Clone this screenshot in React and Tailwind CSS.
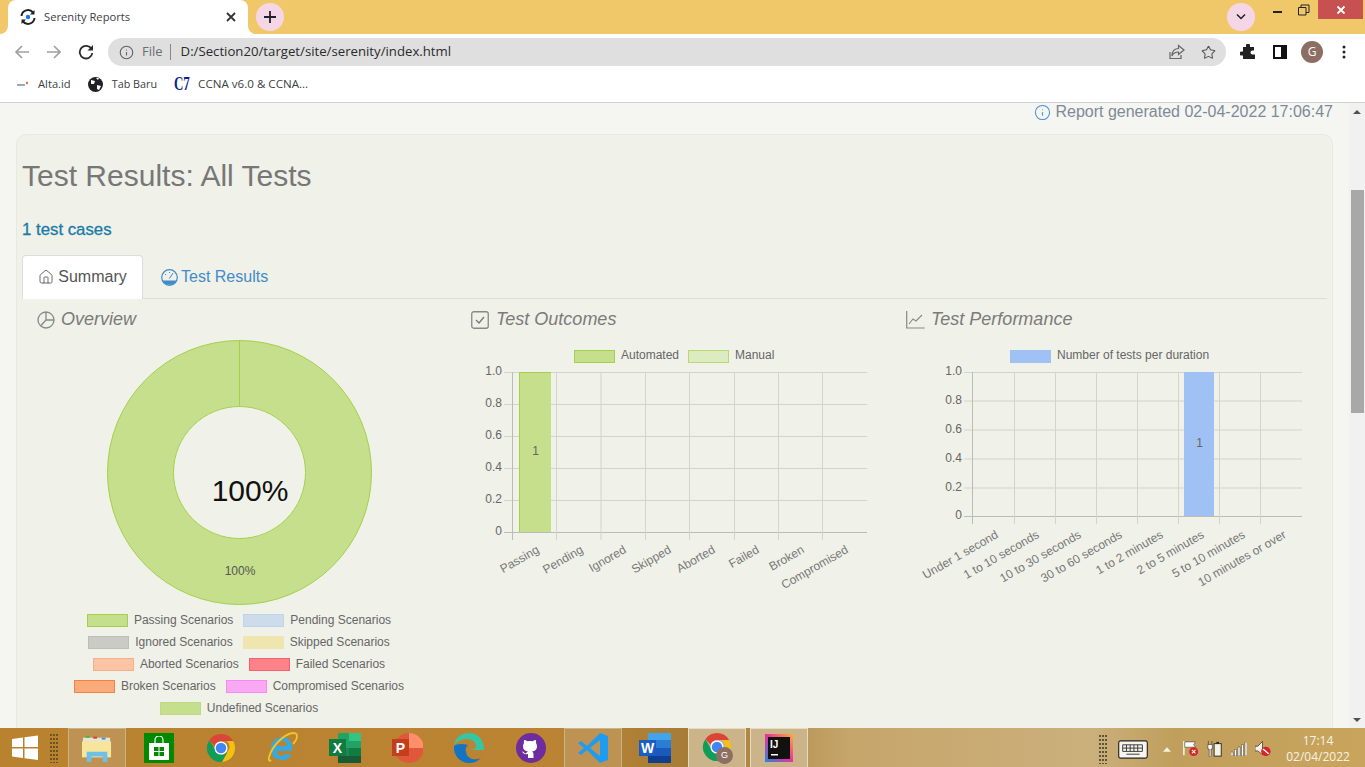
import React from 'react';
import { Info, Star, Home } from 'lucide-react';

const ui = { fontFamily: '"Open Sans","Noto Sans",sans-serif' };

function ChromeLogo({ s = 30 }) {
  return (
    <svg width={s} height={s} viewBox="0 0 32 32">
      <path d="M16 1a15 15 0 0 1 13 7.5H16a7.5 7.5 0 0 0-7 4.8L3.600 7.600A15 15 0 0 1 16 1z" fill="#db4437" />
      <path d="M29 8.500A15 15 0 0 1 17 31l6-11a7.500 7.500 0 0 0-1-11.500z" fill="#f4c20d" />
      <path d="M3.600 7.600L10 18.500a7.500 7.500 0 0 0 13 1.500L17 31A15 15 0 0 1 3.600 7.600z" fill="#0f9d58" />
      <circle cx="16" cy="16" r="7" fill="#fff" />
      <circle cx="16" cy="16" r="5.600" fill="#4285f4" />
    </svg>
  );
}

function Cell({ children, active, open }) {
  const cls = active
    ? 'mx-[2px] w-[58px] h-[39px] flex items-center justify-center border border-b-0 border-[#e6dcc0] bg-[#cbb48a]'
    : open
      ? 'mx-[2px] w-[58px] h-[39px] flex items-center justify-center border border-b-0 border-[#c8b48a] bg-[#bd9252]'
      : 'w-[62px] h-[39px] flex items-center justify-center';
  return <div className={cls}>{children}</div>;
}

function Swatch({ bg, border }) {
  return <span className="w-[41px] h-[13px] border shrink-0" style={{ background: bg, borderColor: border }} />;
}

function LegendRow({ items }) {
  return (
    <div className="h-[22px] flex items-center justify-center gap-[10px] text-[12px] text-[#666]">
      {items.map(([label, bg, border]) => (
        <div key={label} className="flex items-center gap-[6px]">
          <Swatch bg={bg} border={border} />
          <span>{label}</span>
        </div>
      ))}
    </div>
  );
}

function Heading({ icon, children, gap }) {
  return (
    <div className={`h-[41px] pl-[15px] flex items-center ${gap} text-[18px] italic text-[#7b7b7b]`}>
      {icon}
      <span>{children}</span>
    </div>
  );
}

function OutcomesChart() {
  const ys = [372, 404, 436, 468, 500, 532];
  const xs = [512.5, 556.5, 601, 645.5, 689.500, 734.5, 778.5, 822.5];
  const vals = ['1.0', '0.8', '0.6', '0.4', '0.2', '0'];
  const labels = ['Passing', 'Pending', 'Ignored', 'Skipped', 'Aborted', 'Failed', 'Broken', 'Compromised'];
  const ends = [540, 584, 627, 672, 716, 760, 805, 849];
  return (
    <svg width="435" height="270" viewBox="456 340 435 270" style={{ fontFamily: '"Liberation Sans",sans-serif' }}>
      <rect x="574.500" y="350.500" width="40" height="12" fill="#c6df8c" stroke="#a3d14a" />
      <text x="621" y="359" fontSize="12" fill="#666">Automated</text>
      <rect x="688.500" y="350.500" width="40" height="12" fill="#dcebc0" stroke="#b4da70" />
      <text x="735" y="359" fontSize="12" fill="#666">Manual</text>
      {ys.map((y, i) => (
        <g key={y}>
          <line x1="504" x2="867" y1={y + 0.5} y2={y + 0.5} stroke={i === 5 ? '#bcbcb6' : '#d3d4cd'} />
          <text x="502" y={y + 3} fontSize="12" fill="#666" textAnchor="end">{vals[i]}</text>
        </g>
      ))}
      {xs.map((x, i) => (
        <line key={x} x1={x} x2={x} y1="372" y2="540" stroke={i === 0 ? '#bcbcb6' : '#d3d4cd'} />
      ))}
      <rect x="519" y="372" width="32" height="160" fill="#c6df8c" />
      <path d="M519.500 532V372.500H551" fill="none" stroke="#a3d14a" />
      <text x="535.500" y="455" fontSize="12" fill="#666" textAnchor="middle">1</text>
      {labels.map((l, i) => (
        <text key={l} transform={`translate(${ends[i]} 552) rotate(-30)`} fontSize="12" fill="#777" textAnchor="end">{l}</text>
      ))}
    </svg>
  );
}

function PerfChart() {
  const ys = [372, 400.5, 429.500, 458.5, 487.5, 516];
  const xs = [972.5, 1014.5, 1055.5, 1096.5, 1137.5, 1178.5, 1219.5, 1260.5];
  const vals = ['1.0', '0.8', '0.6', '0.4', '0.2', '0'];
  const labels = ['Under 1 second', '1 to 10 seconds', '10 to 30 seconds', '30 to 60 seconds', '1 to 2 minutes', '2 to 5 minutes', '5 to 10 minutes', '10 minutes or over'];
  const ends = [999, 1040, 1082, 1123, 1164, 1205, 1246, 1287];
  return (
    <svg width="435" height="270" viewBox="891 340 435 270" style={{ fontFamily: '"Liberation Sans",sans-serif' }}>
      <rect x="1010" y="350" width="41" height="13" fill="#a0c1f3" />
      <text x="1057" y="359" fontSize="12" fill="#666">Number of tests per duration</text>
      {ys.map((y, i) => (
        <g key={y}>
          <line x1="964" x2="1302" y1={y + 0.5} y2={y + 0.5} stroke={i === 5 ? '#bcbcb6' : '#d3d4cd'} />
          <text x="962" y={y + 3} fontSize="12" fill="#666" textAnchor="end">{vals[i]}</text>
        </g>
      ))}
      {xs.map((x, i) => (
        <line key={x} x1={x} x2={x} y1="372" y2="524" stroke={i === 0 ? '#bcbcb6' : '#d3d4cd'} />
      ))}
      <rect x="1184" y="372" width="30" height="144" fill="#a0c1f3" />
      <text x="1199.500" y="447" fontSize="12" fill="#666" textAnchor="middle">1</text>
      {labels.map((l, i) => (
        <text key={l} transform={`translate(${ends[i]} 537) rotate(-30)`} fontSize="12" fill="#777" textAnchor="end">{l}</text>
      ))}
    </svg>
  );
}

function Donut() {
  return (
    <svg width="435" height="270" viewBox="22 340 435 270" className="block" style={{ fontFamily: '"Liberation Sans",sans-serif' }}>
      <circle cx="239.500" cy="472.500" r="99" fill="none" stroke="#c6df8c" strokeWidth="66" />
      <circle cx="239.500" cy="472.500" r="132" fill="none" stroke="#a3d14a" />
      <circle cx="239.500" cy="472.500" r="66" fill="#f0f1e9" stroke="#a3d14a" />
      <line x1="239.500" x2="239.500" y1="340" y2="407" stroke="#a3d14a" />
      <text x="250" y="501" fontSize="30" fill="#111" textAnchor="middle">100%</text>
      <text x="240" y="575" fontSize="12" fill="#555" textAnchor="middle">100%</text>
    </svg>
  );
}

export default function App() {
  return (
    <div className="w-[1365px] h-[767px] flex flex-col overflow-hidden bg-white" style={{ fontFamily: '"Liberation Sans",sans-serif' }}>
      {/* tab strip */}
      <div className="h-[34px] shrink-0 bg-[#f0c869] flex items-center relative" style={ui}>
        <div className="ml-[8px] w-[240px] h-[34px] bg-white rounded-t-[8px] flex items-center pl-[12px] pr-[12px] self-end relative">
          <svg width="8" height="8" viewBox="0 0 8 8" className="absolute left-[-8px] bottom-0"><path d="M8 0v8H0a8 8 0 0 0 8-8z" fill="#fff" /></svg>
          <svg width="8" height="8" viewBox="0 0 8 8" className="absolute right-[-8px] bottom-0"><path d="M0 0v8h8a8 8 0 0 1-8-8z" fill="#fff" /></svg>
          <svg width="16" height="16" viewBox="0 0 16 16">
            <path d="M1.500 7A6.500 6.500 0 0 1 13 3.500M14.500 9A6.500 6.500 0 0 1 3 12.500" fill="none" stroke="#202124" strokeWidth="2" />
            <path d="M14.500 1v4.500H10M1.500 15v-4.500H6" fill="#202124" />
            <circle cx="8" cy="8" r="2.200" fill="#1a73e8" />
          </svg>
          <span className="ml-[8px] text-[11.200px] text-[#3c4043] flex-1">Serenity Reports</span>
          <svg width="10" height="10" viewBox="0 0 10 10"><path d="M1 1l8 8M9 1L1 9" stroke="#333" strokeWidth="1.800" /></svg>
        </div>
        <div className="ml-[8px] w-[28px] h-[28px] rounded-full bg-[#f5d6e6] flex items-center justify-center">
          <svg width="14" height="14" viewBox="0 0 14 14"><path d="M7 1v12M1 7h12" stroke="#202124" strokeWidth="1.800" /></svg>
        </div>
        <div className="flex-1" />
        <div className="w-[28px] h-[28px] rounded-full bg-[#f5d6e6] flex items-center justify-center mr-[16px]">
          <svg width="12" height="8" viewBox="0 0 12 8"><path d="M2 1.500l4 4 4-4" fill="none" stroke="#202124" strokeWidth="1.500" /></svg>
        </div>
        <div className="w-[14px] h-[34px] flex items-start pt-[11px] mr-[13px]"><span className="block w-[9px] h-[2px] bg-[#222] ml-[2px]" /></div>
        <svg width="12" height="12" viewBox="0 0 12 12" className="self-start mt-[4px] mr-[8px]">
          <path d="M.5 3.500h7.500v7.500H.5zM3 3.500V1h8v7.500H8" fill="none" stroke="#222" />
        </svg>
        <div className="w-[45px] h-[19px] bg-[#c75050] flex items-center justify-center self-start mr-[2px]">
          <svg width="10" height="10" viewBox="0 0 10 10"><path d="M1.500 1.500l7 7M8.500 1.500l-7 7" stroke="#fff" strokeWidth="1.800" /></svg>
        </div>
      </div>

      {/* toolbar */}
      <div className="h-[36px] shrink-0 flex items-center relative" style={ui}>
        <div className="w-[108px] flex items-center shrink-0">
          <svg width="16" height="16" viewBox="0 0 16 16" className="ml-[14px]"><path d="M15 8H2M8 2L2 8l6 6" fill="none" stroke="#a0a0a0" strokeWidth="1.700" /></svg>
          <svg width="16" height="16" viewBox="0 0 16 16" className="ml-[16px]"><path d="M1 8h13M8 2l6 6-6 6" fill="none" stroke="#a0a0a0" strokeWidth="1.700" /></svg>
          <svg width="16" height="16" viewBox="0 0 16 16" className="ml-[16px]"><path d="M13.500 5A6.300 6.300 0 1 0 14.300 9" fill="none" stroke="#2b2b2b" strokeWidth="1.800" /><path d="M15 1v5.500H9.500z" fill="#2b2b2b" /></svg>
        </div>
        <div className="w-[1118px] h-[28px] rounded-full bg-[#dfdfdf] flex items-center shrink-0">
          <Info size={15} strokeWidth={1.800} color="#5f6368" className="ml-[11px]" />
          <span className="ml-[8px] text-[13px] text-[#6b6e71]">File</span>
          <span className="ml-[7px] w-px h-[16px] bg-[#888]" />
          <span className="ml-[10px] text-[13.200px] text-[#2b2b2b]">D:/Section20/target/site/serenity/index.html</span>
          <div className="flex-1" />
          <svg width="16" height="16" viewBox="0 0 16 16"><path d="M1 8v6.500h11V11M9.500 1.500L15 6l-5.500 4.500V8C6 8 4 9.500 3 12c0-5 2.500-7.500 6.500-7.500z" fill="none" stroke="#666" strokeWidth="1.200" /></svg>
          <Star size={15} strokeWidth={1.700} color="#555" className="ml-[16px] mr-[10px]" />
        </div>
        <svg width="16" height="16" viewBox="0 0 16 16" className="ml-[14px]"><path d="M6 1.500a2 2 0 0 1 4 0V3h4v3.500h-1.500a2 2 0 0 0 0 4H15V15H3v-3.500H1.500a2 2 0 0 1 0-4H3V3h3z" fill="#202124" /></svg>
        <svg width="14" height="14" viewBox="0 0 14 14" className="ml-[17px]"><path d="M0 0h14v14H0zM2 2v10h6V2z" fill="#111" fillRule="evenodd" /></svg>
        <div className="ml-[14px] w-[22px] h-[22px] rounded-full bg-[#8d6e63] text-white text-[12px] flex items-center justify-center">G</div>
        <svg width="4" height="14" viewBox="0 0 4 14" className="ml-[19px]"><circle cx="2" cy="2" r="1.500" fill="#222" /><circle cx="2" cy="7" r="1.500" fill="#222" /><circle cx="2" cy="12" r="1.500" fill="#222" /></svg>
      </div>

      {/* bookmarks */}
      <div className="h-[33px] shrink-0 flex items-center pb-[4px] border-b border-[#cfcfcf] text-[11.200px] text-[#3c4043]" style={ui}>
        <svg width="12" height="6" viewBox="0 0 12 6" className="ml-[17px]"><path d="M0 4h8" stroke="#7a8a9a" strokeWidth="1.500" /><circle cx="10" cy="2" r="1.200" fill="#e8703a" /></svg>
        <span className="ml-[9px]">Alta.id</span>
        <svg width="15" height="15" viewBox="0 0 15 15" className="ml-[17px]"><circle cx="7.500" cy="7.500" r="7.500" fill="#202124" /><path d="M3 3l4 1-1 3-3 0zM9 8l4 1-2 4-2-1zM8 1h3l-1 2z" fill="#fff" /></svg>
        <span className="ml-[9px] text-[10.800px]">Tab Baru</span>
        <span className="ml-[17px] text-[18px] font-black text-[#0b1f8f] leading-none w-[16px] whitespace-nowrap inline-block origin-left scale-x-[0.72]" style={{ fontFamily: '"Liberation Serif",serif' }}>C7</span>
        <span className="ml-[8px] text-[11.600px]">CCNA v6.0 &amp; CCNA...</span>
      </div>

      {/* page */}
      <div className="flex-1 min-h-0 flex bg-[#f5f6f1] overflow-hidden">
        <div className="w-[1349px] shrink-0 overflow-hidden">
          <div className="h-[18px] pr-[16px] flex items-center justify-end gap-[4px] text-[16px] text-[#7d8a99]">
            <Info size={17} strokeWidth={1.500} color="#4a90d9" />
            <span>Report generated 02-04-2022 17:06:47</span>
          </div>
          <div className="ml-[16px] mt-[13px] w-[1317px] h-[640px] rounded-[10px] border border-[#e8e9e0] bg-[#f0f1e9] pl-[5px] pr-[5px]">
            <h1 className="mt-[23px] h-[36px] text-[30px] leading-[36px] text-[#777]">Test Results: All Tests</h1>
            <div className="mt-[26px] h-[20px] text-[16.800px] leading-[20px] font-medium text-[#1a7ba8]" style={{ WebkitTextStroke: '0.3px #1a7ba8' }}>1 test cases</div>
            <div className="mt-[15px] h-[44px] flex border-b border-[#dcdde0]">
              <div className="w-[121px] h-[44px] pb-[2px] bg-white border border-b-0 border-[#dcdde0] rounded-t-[4px] flex items-center justify-center gap-[4px] text-[16px] text-[#555]">
                <Home size={16} strokeWidth={1.300} color="#555" />
                <span>Summary</span>
              </div>
              <div className="ml-[18px] h-[44px] flex items-center gap-[3px] text-[16px] text-[#428bca]">
                <svg width="17" height="17" viewBox="0 0 17 17">
                  <circle cx="8.500" cy="8.500" r="7.800" fill="none" stroke="#428bca" strokeWidth="1.200" />
                  <path d="M1.500 11.500h14a7.800 7.800 0 0 1-14 0z" fill="#428bca" />
                  <path d="M8.500 9.500L12 4M8.500 3v1M4 5l1 1" fill="none" stroke="#428bca" />
                </svg>
                <span>Test Results</span>
              </div>
            </div>
            <div className="flex">
              <div className="w-[434px] shrink-0">
                <Heading gap="gap-[6px]" icon={
                  <svg width="18" height="18" viewBox="0 0 18 18"><circle cx="9" cy="9" r="8" fill="none" stroke="#888" strokeWidth="1.300" /><path d="M9 1v8h8M9 9l-5.500 6" fill="none" stroke="#888" strokeWidth="1.300" /></svg>
                }>Overview</Heading>
                <Donut />
                <div className="mt-[-1px]">
                  <LegendRow items={[['Passing Scenarios', '#c6df8c', '#a3d14a'], ['Pending Scenarios', '#cddcea', '#bcd5ec']]} />
                  <LegendRow items={[['Ignored Scenarios', '#cacbc4', '#bdbeb8'], ['Skipped Scenarios', '#efe5ae', '#efe5ae']]} />
                  <LegendRow items={[['Aborted Scenarios', '#fbc4a4', '#fbae85'], ['Failed Scenarios', '#fd8289', '#f6606c']]} />
                  <LegendRow items={[['Broken Scenarios', '#fbaa7b', '#f9803f'], ['Compromised Scenarios', '#f9a9f4', '#f98af5']]} />
                  <LegendRow items={[['Undefined Scenarios', '#c6df8c', '#bcdb80']]} />
                </div>
              </div>
              <div className="w-[435px] shrink-0">
                <Heading gap="gap-[7px]" icon={
                  <svg width="18" height="18" viewBox="0 0 18 18"><rect x=".75" y=".75" width="16.500" height="16.500" rx="2" fill="none" stroke="#888" strokeWidth="1.300" /><path d="M5 9l3 3 5-6" fill="none" stroke="#777" strokeWidth="1.300" /></svg>
                }>Test Outcomes</Heading>
                <OutcomesChart />
              </div>
              <div className="w-[435px] shrink-0">
                <Heading gap="gap-[6px]" icon={
                  <svg width="19" height="18" viewBox="0 0 19 18"><path d="M.7 0v17h18" fill="none" stroke="#888" strokeWidth="1.200" /><path d="M3 13l4-5 3 2 6-6" fill="none" stroke="#888" strokeWidth="1.100" /></svg>
                }>Test Performance</Heading>
                <PerfChart />
              </div>
            </div>
          </div>
        </div>
        <div className="w-[16px] shrink-0 bg-[#f1f1f1] flex flex-col items-center">
          <div className="h-[17px] flex items-center"><span className="w-0 h-0 border-x-[4px] border-x-transparent border-b-[4px] border-b-[#505050]" /></div>
          <div className="mt-[70px] w-[13px] h-[223px] bg-[#a8a8a8] shrink-0 self-end mr-[1px]" />
          <div className="flex-1" />
          <div className="h-[17px] flex items-center"><span className="w-0 h-0 border-x-[4px] border-x-transparent border-t-[4px] border-t-[#505050]" /></div>
        </div>
      </div>

      {/* taskbar */}
      <div className="h-[39px] shrink-0 flex items-center" style={{ background: 'linear-gradient(90deg,#b9822f 0%,#bb8433 40%,#a37c38 52%,#c6a56a 62%,#cbb07c 80%,#c09f5c 86%,#c9a45c 100%)' }}>
        <svg width="26" height="26" viewBox="0 0 26 26" className="ml-[12px] mr-[12px] shrink-0"><path d="M0 4l11-1.500V12H0zM12.500 2.300L26 .5V12H12.500zM0 13.500h11V23L0 21.500zM12.500 13.500H26V25l-13.500-1.800z" fill="#fff" /></svg>
        <svg width="8" height="30" viewBox="0 0 8 30" className="shrink-0 mr-[8px]"><g fill="#6b5426">{[1,5,9,13,17,21,25,29].map((y) => <g key={y}><rect x="0" y={y} width="2" height="2" /><rect x="3" y={y} width="2" height="2" /><rect x="6" y={y} width="2" height="2" /></g>)}</g></svg>
        <Cell open>
          <svg width="32" height="30" viewBox="0 0 32 32"><path d="M1 5h29v6H1z" fill="#e8e4d0" /><rect x="4" y="3" width="4" height="2" fill="#3cb54a" /><rect x="12" y="4" width="4" height="2" fill="#d04030" /><rect x="21" y="5" width="4" height="2" fill="#3a90d8" /><path d="M0 9h31v17H0z" fill="#f7e59c" /><path d="M5 20h22v11h-5v-6H10v6H5z" fill="#6ec0e8" /></svg>
        </Cell>
        <Cell>
          <div className="w-[30px] h-[30px] bg-[#008a00] flex items-center justify-center">
            <svg width="22" height="24" viewBox="0 0 22 24"><path d="M1 7h20v17H1z" fill="#fff" /><path d="M7 7V4a4 4 0 0 1 8 0v3" fill="none" stroke="#fff" strokeWidth="1.200" /><path d="M6 11h4.500v4H6zM11.500 11H16v4h-4.500zM6 16h4.500v4H6zM11.500 16H16v4h-4.500z" fill="#008a00" /></svg>
          </div>
        </Cell>
        <Cell><ChromeLogo /></Cell>
        <Cell>
          <svg width="32" height="32" viewBox="0 0 32 32"><path d="M25 15c0-6-4-10-10-10S4 10 4 17s5 11 11 11c5 0 8-2 9-6h-6c-1 1-2 2-3 2-3 0-5-2-5-5h15zM10 14c0-3 2-5 5-5s5 2 5 5z" fill="#37a9e0" fillRule="evenodd" /><path d="M4 28C0 32 1 20 12 9 21 0 30-1 30 4c0 3-2 6-4 8" fill="none" stroke="#f2c522" strokeWidth="1.800" /></svg>
        </Cell>
        <Cell>
          <svg width="32" height="32" viewBox="0 0 32 32"><path d="M9 1h23v30H9z" fill="#21a366" /><path d="M20 1h12v8H20z" fill="#33c481" /><path d="M9 16h11v8H9z" fill="#185c37" opacity=".4" /><path d="M20 16h12v8H20z" fill="#107c41" /><path d="M9 24h23v7H9z" fill="#185c37" /><rect x="0" y="7" width="17" height="17" fill="#107c41" /><text x="8.500" y="20.500" fontSize="14" fontWeight="700" fill="#fff" textAnchor="middle">X</text></svg>
        </Cell>
        <Cell>
          <svg width="32" height="32" viewBox="0 0 32 32"><circle cx="18" cy="16" r="15" fill="#e0573c" /><path d="M18 1a15 15 0 0 1 15 15H18z" fill="#ff8f6b" /><rect x="1" y="7" width="17" height="17" fill="#c43e1c" /><text x="9.500" y="20.500" fontSize="14" fontWeight="700" fill="#fff" textAnchor="middle">P</text></svg>
        </Cell>
        <Cell>
          <svg width="32" height="32" viewBox="0 0 32 32"><path d="M31 17C31 8 25 1 16 1 8 1 2 6 1 14c3-5 8-7 13-7 6 0 9 4 9 7s-3 4-7 4h15z" fill="#37c6a4" /><path d="M1 14c-1 9 6 17 15 17 5 0 9-2 12-5-6 3-14 1-15-6-1-3 0-5 2-7C9 11 3 12 1 14z" fill="#1474c4" /></svg>
        </Cell>
        <Cell>
          <svg width="30" height="30" viewBox="0 0 30 30"><circle cx="15" cy="15" r="15" fill="#6e2c9e" /><path d="M12 25v-4c-4 1-5-1-6-2.500 2 0 2 2 4 2 .5-1 1-1.500 2-2-3-.5-5-2-5-5 0-1.500.5-2.500 1-3.500-.2-.8-.2-2 .3-3 1.200 0 2.200.6 3 1.300a9 9 0 0 1 5.400 0c.8-.7 1.800-1.300 3-1.300.5 1 .5 2.200.3 3 .5 1 1 2 1 3.500 0 3-2 4.500-5 5 1 .6 1.500 1.500 1.500 3V25z" fill="#fff" /></svg>
        </Cell>
        <Cell open>
          <svg width="32" height="32" viewBox="0 0 32 32"><path d="M23 1L10 14l-6-5-3 2 6 5-6 5 3 2 6-5 13 13 8-3V4z" fill="#1f9cf0" /><path d="M23 8v16l-10-8z" fill="#bb9557" /></svg>
        </Cell>
        <Cell>
          <svg width="32" height="32" viewBox="0 0 32 32"><path d="M9 1h23v30H9z" fill="#2b7cd3" /><path d="M9 1h23v7H9z" fill="#41a5ee" /><path d="M9 16h23v8H9z" fill="#185abd" /><path d="M9 24h23v7H9z" fill="#103f91" /><rect x="0" y="8" width="17" height="16" fill="#185abd" /><rect x="1" y="9" width="15" height="14" fill="#1c5fc4" /><text x="8.500" y="21" fontSize="14" fontWeight="700" fill="#fff" textAnchor="middle">W</text></svg>
        </Cell>
        <Cell active>
          <div className="relative w-[30px] h-[32px]">
            <ChromeLogo />
            <div className="absolute left-[14px] top-[15px] w-[17px] h-[17px] rounded-full bg-[#8d6e63] text-white text-[9px] flex items-center justify-center">G</div>
          </div>
        </Cell>
        <Cell active>
          <svg width="28" height="28" viewBox="0 0 28 28" style={{ fontFamily: '"Liberation Sans",sans-serif' }}>
            <defs><linearGradient id="ij" x1="0" y1="1" x2="1" y2="0"><stop offset="0" stopColor="#1e88e5" /><stop offset=".5" stopColor="#ec2f9c" /><stop offset="1" stopColor="#f9b233" /></linearGradient></defs>
            <rect width="28" height="28" fill="url(#ij)" /><rect x="3" y="3" width="22" height="22" fill="#111" />
            <text x="5" y="14" fontSize="10" fontWeight="700" fill="#fff">IJ</text><rect x="6" y="20" width="7" height="1.500" fill="#fff" />
          </svg>
        </Cell>
        <div className="flex-1" />
        <div className="flex items-center pt-[3px] shrink-0">
          <svg width="8" height="30" viewBox="0 0 8 30" className="shrink-0 mr-[11px]"><g fill="#5e5436">{[1,5,9,13,17,21,25,29].map((y) => <g key={y}><rect x="0" y={y} width="2" height="2" /><rect x="3" y={y} width="2" height="2" /><rect x="6" y={y} width="2" height="2" /></g>)}</g></svg>
          <svg width="30" height="19" viewBox="0 0 32 20" className="shrink-0 mr-[15px]"><rect x=".75" y=".75" width="30.500" height="18.500" rx="2" fill="#f7f5ee" stroke="#222" strokeWidth="1.200" /><path d="M5 5h21v7H5zM5 8.500h21M9 5v7M13 5v7M17 5v7M21 5v7M9 15h14" fill="none" stroke="#333" /></svg>
          <svg width="8" height="5" viewBox="0 0 9 5" className="shrink-0 mr-[12px]"><path d="M4.500 0L9 5H0z" fill="#f3f0e6" /></svg>
          <svg width="16" height="16" viewBox="0 0 18 18" className="shrink-0 mr-[8px]"><path d="M1 0v16" stroke="#fff" strokeWidth="1.500" /><path d="M2 1h12l-2 3 2 3H2z" fill="#fff" stroke="#333" strokeWidth=".6" /><circle cx="12" cy="12" r="5" fill="#d8232a" /><path d="M10 10l4 4M14 10l-4 4" stroke="#fff" strokeWidth="1.200" /></svg>
          <svg width="16" height="16" viewBox="0 0 16 18" className="shrink-0 mr-[8px]"><path d="M.5 0v4M4.500 0v4M0 4h5v5H3.500v9h-2V9H0z" fill="#fff" stroke="#222" strokeWidth=".6" /><rect x="7" y="3" width="8" height="14" fill="#f5f3e6" stroke="#222" /><rect x="9.500" y="1" width="3" height="2" fill="#222" /></svg>
          <svg width="16" height="14" viewBox="0 0 16 14" className="shrink-0 mr-[8px]"><path d="M0 10h2v4H0zM3.500 7.500h2V14h-2zM7 5h2v9H7zM10.500 2.500h2V14h-2zM14 0h2v14h-2z" fill="#fff" stroke="#222" strokeWidth=".4" /></svg>
          <svg width="16" height="16" viewBox="0 0 17 16" className="shrink-0 mr-[17px]"><path d="M0 5h3l5-5v14L3 10H0z" fill="#f5f3e6" stroke="#222" strokeWidth=".7" /><circle cx="11.500" cy="10.500" r="5" fill="#d8232a" /><path d="M8.500 8l6 5" stroke="#fff" strokeWidth="1.500" /></svg>
          <div className="w-[60px] shrink-0 mr-[17px] flex flex-col items-center text-[12px] leading-[16px] text-[#f7f3e6]" style={ui}>
            <span>17:14</span>
            <span>02/04/2022</span>
          </div>
        </div>
      </div>
    </div>
  );
}
